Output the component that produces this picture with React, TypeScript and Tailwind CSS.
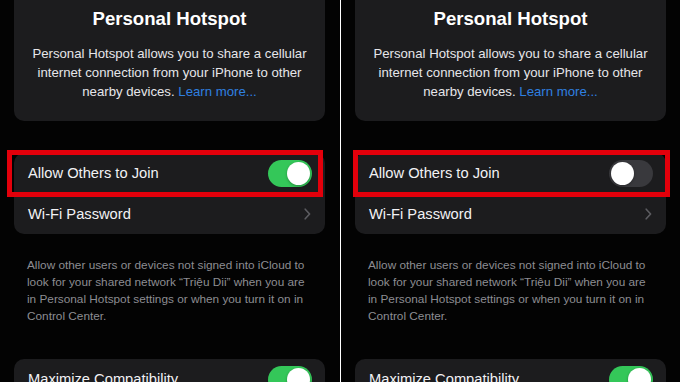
import React from 'react';

const font = { fontFamily: '"Liberation Sans", Arial, sans-serif' };

function Toggle({ on }: { on: boolean }) {
  return (
    <div
      className={
        on
          ? 'flex h-[27px] w-[44px] shrink-0 items-center justify-end rounded-full bg-[#34c759] px-[2px]'
          : 'flex h-[27px] w-[44px] shrink-0 items-center justify-start rounded-full bg-[#39393d] px-[2px]'
      }
    >
      <div className="h-[23px] w-[23px] rounded-full bg-white shadow-[0_1px_3px_rgba(0,0,0,0.3)]" />
    </div>
  );
}

function Chevron() {
  return (
    <svg width="7" height="12" viewBox="0 0 7 12" fill="none">
      <path d="M1.2 1.2 5.6 6l-4.4 4.8" stroke="#5c5c61" strokeWidth="1.6" strokeLinecap="round" strokeLinejoin="round" />
    </svg>
  );
}

interface PanelProps {
  on: boolean;
  boxClass: string;
}

function Panel({ on, boxClass }: PanelProps) {
  return (
    <div className="flex flex-col px-[14px]">
      <div className="w-[311px] rounded-b-[10px] bg-[#1c1c1e] pt-[7px] pb-[20.5px] text-center">
        <h1 className="text-[18.6px] font-bold leading-[24px] text-white">Personal Hotspot</h1>
        <p className="mt-[12.5px] text-[13.2px] leading-[19px] text-[#e6e6ea]">
          Personal Hotspot allows you to share a cellular
          <br />
          internet connection from your iPhone to other
          <br />
          nearby devices. <span className="text-[#2f80e0]">Learn more...</span>
        </p>
      </div>

      <div className="relative mt-[32px] w-[311px] rounded-[10px] bg-[#1c1c1e]">
        <div className="flex h-[41px] items-center justify-between pl-[14px] pr-[13px]">
          <span className="text-[14.7px] text-[#f2f2f5]">Allow Others to Join</span>
          <Toggle on={on} />
        </div>
        <div className="flex h-[40px] items-center justify-between pl-[14px] pr-[14px]">
          <span className="text-[14.7px] text-[#f2f2f5]">Wi-Fi Password</span>
          <Chevron />
        </div>
        <div className={boxClass} />
      </div>

      <p className="mt-[22.5px] pl-[13px] text-[11.8px] leading-[17px] text-[#8d8d92]">
        Allow other users or devices not signed into iCloud to
        <br />
        look for your shared network “Triệu Dii” when you are
        <br />
        in Personal Hotspot settings or when you turn it on in
        <br />
        Control Center.
      </p>

      <div className="mt-[34.5px] w-[311px] rounded-[10px] bg-[#1c1c1e]">
        <div className="flex h-[41px] items-center justify-between pl-[14px] pr-[13px]">
          <span className="text-[14.7px] text-[#f2f2f5]">Maximize Compatibility</span>
          <Toggle on={true} />
        </div>
      </div>
    </div>
  );
}

export default function App() {
  return (
    <div className="flex h-[382px] w-[680px] overflow-hidden bg-[#030303]" style={font}>
      <div className="w-[340px] shrink-0">
        <Panel
          on={true}
          boxClass="pointer-events-none absolute top-[-3px] left-[-7px] right-[2px] h-[47px] border-[5px] border-[#e3000b]"
        />
      </div>
      <div className="w-px shrink-0 bg-white" />
      <div className="w-[339px] shrink-0">
        <Panel
          on={false}
          boxClass="pointer-events-none absolute top-[-3px] left-[-2px] right-[-4px] h-[47px] border-[5px] border-[#e3000b]"
        />
      </div>
    </div>
  );
}
